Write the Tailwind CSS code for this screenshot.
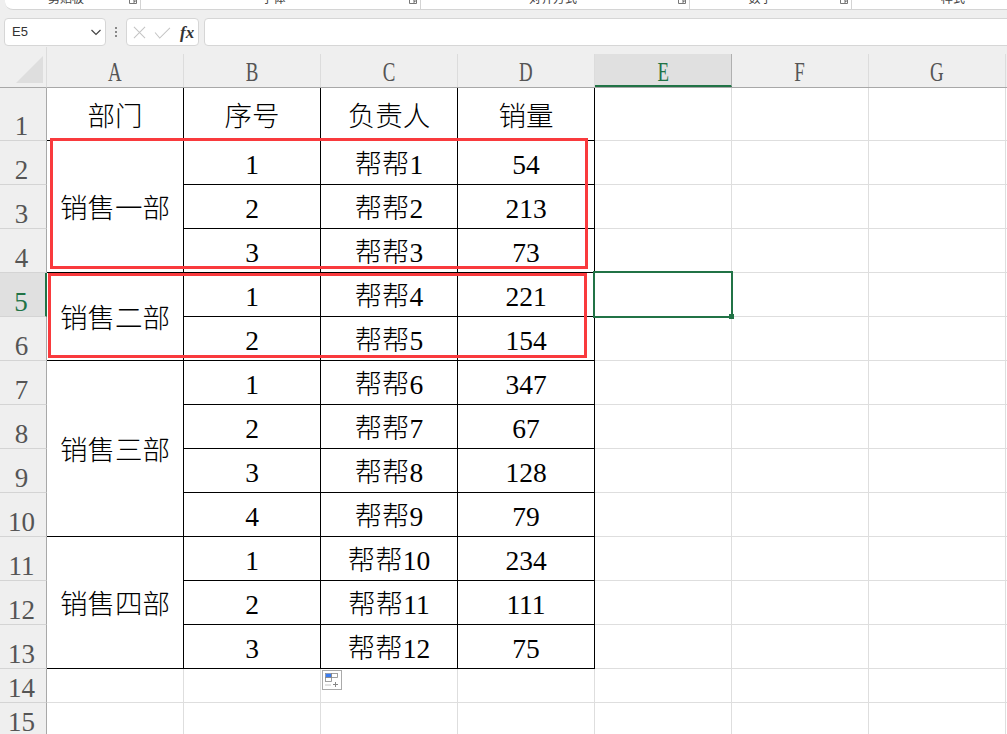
<!DOCTYPE html>
<html lang="zh">
<head>
  <meta charset="UTF-8" />
  <title>销量表</title>
  <script src="https://cdn.jsdelivr.net/npm/@tailwindcss/browser@4"></script>
</head>
<body class="bg-[#efefef] overflow-hidden">
  <div class="relative w-[1007px] h-[734px] overflow-hidden font-['Liberation_Serif','Noto_Sans_CJK_SC',serif] text-black">
    <!-- ribbon bottom edge -->
    <div class="flex w-[1060px] h-[10px] ml-[5px] bg-white border-b border-[#d4d4d4] rounded-bl-lg overflow-hidden font-['Noto_Sans_CJK_SC',sans-serif] text-[12px] leading-none text-[#444]">
      <div class="relative shrink-0 w-[136px] flex justify-center pr-[13px] border-r border-[#d4d4d4]"><span class="-mt-[8px]">剪贴板</span>
        <svg class="absolute right-[3px] -top-[4px] w-[8px] h-[9px]" viewBox="0 0 8 9" fill="none" stroke="#777"><path d="M.5 0v7.5H7.5V0M3 2l3 4M6 4v2H4"/></svg></div>
      <div class="relative shrink-0 w-[280px] flex justify-center pr-[14px] border-r border-[#d4d4d4]"><span class="-mt-[8px]">字体</span>
        <svg class="absolute right-[3px] -top-[4px] w-[8px] h-[9px]" viewBox="0 0 8 9" fill="none" stroke="#777"><path d="M.5 0v7.5H7.5V0M3 2l3 4M6 4v2H4"/></svg></div>
      <div class="relative shrink-0 w-[269px] flex justify-center pr-[4px] border-r border-[#d4d4d4]"><span class="-mt-[8px]">对齐方式</span>
        <svg class="absolute right-[3px] -top-[4px] w-[8px] h-[9px]" viewBox="0 0 8 9" fill="none" stroke="#777"><path d="M.5 0v7.5H7.5V0M3 2l3 4M6 4v2H4"/></svg></div>
      <div class="relative shrink-0 w-[162px] flex justify-center pr-[20px] border-r border-[#d4d4d4]"><span class="-mt-[8px]">数字</span>
        <svg class="absolute right-[3px] -top-[4px] w-[8px] h-[9px]" viewBox="0 0 8 9" fill="none" stroke="#777"><path d="M.5 0v7.5H7.5V0M3 2l3 4M6 4v2H4"/></svg></div>
      <div class="shrink-0 w-[202px] flex justify-center"><span class="-mt-[8px]">样式</span></div>
    </div>

    <!-- formula bar -->
    <div class="flex items-stretch h-[28px] mt-[8px] pl-[4px]">
      <div class="shrink-0 w-[102px] flex items-center justify-between pl-[7px] pr-[3px] bg-white border border-[#d6d6d6] rounded-[4px] font-['Liberation_Sans',sans-serif] text-[13px] text-[#333]">
        E5
        <svg class="w-[12px] h-[12px]" viewBox="0 0 12 12" fill="none" stroke="#444" stroke-width="1.2"><path d="M1.5 4l4.5 4.5L10.5 4"/></svg>
      </div>
      <div class="shrink-0 w-[20px] flex flex-col items-center justify-center gap-[2px]">
        <span class="w-[2px] h-[2px] bg-[#888]"></span><span class="w-[2px] h-[2px] bg-[#888]"></span><span class="w-[2px] h-[2px] bg-[#888]"></span>
      </div>
      <div class="shrink-0 w-[73px] flex items-center bg-white border border-[#d6d6d6] rounded-[4px] pl-[6px]">
        <svg class="w-[13px] h-[13px]" viewBox="0 0 14 14" fill="none" stroke="#c4c4c4" stroke-width="1.1"><path d="M1 1l12 12M13 1L1 13"/></svg>
        <svg class="w-[17px] h-[13px] ml-[8px]" viewBox="0 0 18 14" fill="none" stroke="#c4c4c4" stroke-width="1.1"><path d="M1 7l5 6L17 2"/></svg>
        <span class="ml-[9px] italic font-semibold text-[17px] leading-none text-[#333]">fx</span>
      </div>
      <div class="shrink-0 w-[820px] ml-[5px] bg-white border border-[#d6d6d6] rounded-[4px]"></div>
    </div>

    <!-- sheet -->
    <div id="sheet" class="grid pt-[1px] grid-cols-[47px_repeat(8,137px)] grid-rows-[41px_53px_repeat(12,44px)_34px_34px]"></div>

    <!-- red marks -->
    <div class="absolute left-[50px] top-[138px] w-[538px] h-[131px] border-[3px] border-[#f93a3d]"></div>
    <div class="absolute left-[48px] top-[273px] w-[539px] h-[85px] border-[3px] border-[#f93a3d]"></div>

    <!-- selected cell -->
    <div class="absolute left-[593px] top-[271px] w-[140px] h-[47px] border-2 border-[#217346]"></div>
    <div class="absolute left-[729px] top-[314px] w-[5px] h-[5px] bg-[#217346]"></div>

    <!-- paste options -->
    <div class="absolute left-[322px] top-[670px] w-[20px] h-[20px] bg-white border border-[#aaa] flex items-center justify-center">
      <svg class="w-[16px] h-[16px]" viewBox="0 0 16 16" fill="none">
        <rect x="1.5" y="1.5" width="6" height="4" fill="#3b7cf0" stroke="#888" stroke-width="0.6"/>
        <rect x="7.5" y="1.5" width="6" height="4" stroke="#888" stroke-width="0.8"/>
        <rect x="1.5" y="5.5" width="6" height="4" stroke="#888" stroke-width="0.8"/>
        <path d="M1.5 13h6" stroke="#888" stroke-dasharray="1 1"/>
        <path d="M9 12.5h5M11.5 10v5" stroke="#888"/>
      </svg>
    </div>
  </div>

  <script>
    const colHead = "relative flex items-end justify-center pr-[1px] pb-[1px] text-[27px] leading-[28px] text-[#555] border-b border-b-[#a8a8a8]";
    const rowHead = "flex items-end justify-center pr-[3px] text-[27px] leading-[28px] text-[#555] bg-[#efefef] border-r border-[#a8a8a8] border-b border-b-[#d4d4d4]";
    const cell = "flex items-center justify-center pt-[4px] text-[27.5px] leading-none font-extralight border-r border-b border-black bg-white";
    const blank = "border-r border-b border-[#dedede] bg-white";

    const depts = { 2: ['销售一部', 'row-span-3'], 5: ['销售二部', 'row-span-2'], 7: ['销售三部', 'row-span-4'], 11: ['销售四部', 'row-span-3'] };
    const rows = [
      ['部门', '序号', '负责人', '销量'],
      [1, '帮帮1', 54], [2, '帮帮2', 213], [3, '帮帮3', 73],
      [1, '帮帮4', 221], [2, '帮帮5', 154],
      [1, '帮帮6', 347], [2, '帮帮7', 67], [3, '帮帮8', 128], [4, '帮帮9', 79],
      [1, '帮帮10', 234], [2, '帮帮11', 111], [3, '帮帮12', 75]
    ];

    let html = `<div class="relative bg-[#efefef] border-r border-r-[#dcdcdc] border-b border-b-[#a8a8a8]">
      <svg class="absolute left-[16px] top-[9px] w-[28px] h-[28px]" viewBox="0 0 28 28"><path d="M0 27L27 0V27Z" fill="#dedede"/></svg>
    </div>`;
    ['A', 'B', 'C', 'D', 'E', 'F', 'G', 'H'].forEach(l => {
      if (l === 'E') {
        html += `<div class="${colHead} text-[#217346]"><div class="absolute inset-x-0 top-[7px] bottom-0 bg-[#e0e0e0] border-r border-[#b0b0b0] border-b-2 border-b-[#217346]"></div><span class="relative inline-block scale-x-70">${l}</span></div>`;
      } else {
        html += `<div class="${colHead} bg-[#efefef]"><div class="absolute right-0 top-[7px] bottom-0 w-px bg-[#dcdcdc]"></div><span class="inline-block scale-x-70">${l}</span></div>`;
      }
    });

    for (let r = 1; r <= 15; r++) {
      if (r === 5) {
        html += `<div class="${rowHead} !bg-[#e0e0e0] !text-[#217346] !border-r-2 !border-r-[#217346]">${r}</div>`;
      } else {
        html += `<div class="${rowHead}">${r}</div>`;
      }
      if (r <= 13) {
        const vals = rows[r - 1];
        if (r === 1) {
          vals.forEach(v => { html += `<div class="${cell} !pt-[5px]">${v}</div>`; });
        } else {
          if (depts[r]) html += `<div class="${cell} !pt-[5px] ${depts[r][1]}">${depts[r][0]}</div>`;
          vals.forEach(v => { html += `<div class="${cell}">${v}</div>`; });
        }
        for (let c = 0; c < 4; c++) html += `<div class="${blank}"></div>`;
      } else {
        for (let c = 0; c < 8; c++) html += `<div class="${blank}"></div>`;
      }
    }
    document.getElementById('sheet').innerHTML = html;
  </script>
</body>
</html>
